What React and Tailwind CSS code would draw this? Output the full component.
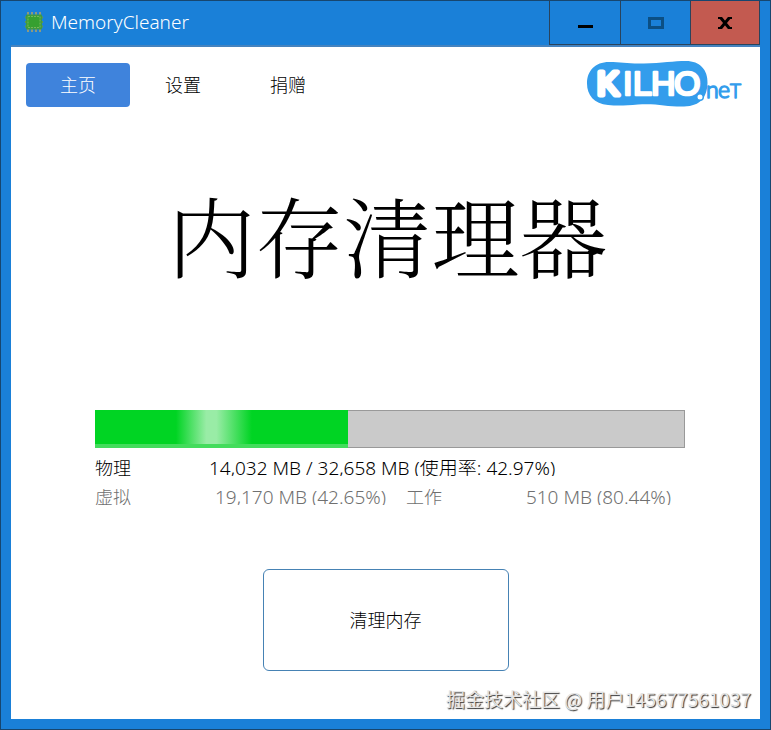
import React, { useState } from "react";

const tabs = [
  { id: "home", label: "主页" },
  { id: "settings", label: "设置" },
  { id: "donate", label: "捐赠" },
];

const memory = {
  physical: { used: "14,032 MB", total: "32,658 MB", percent: 42.97 },
  virtual: { used: "19,170 MB", percent: 42.65 },
  working: { used: "510 MB", percent: 80.44 },
};

const ChipIcon = () => (
  <svg width="18" height="20" viewBox="0 0 18 20" aria-hidden="true">
    <path d="M3 0v20M7 0v20M11 0v20M15 0v20" stroke="#8c9a80" strokeWidth="2" />
    <path d="M0 5.500h18M0 10h18M0 14.500h18" stroke="#5c9a4c" strokeWidth="2" />
    <rect x="1" y="2.500" width="16" height="15" rx="1" fill="#3f9a40" />
    <rect
      x="3"
      y="4.500"
      width="12"
      height="11"
      fill="#36a030"
      stroke="#74b858"
      strokeDasharray="2 1"
    />
  </svg>
);

const Logo = () => (
  <svg width="158" height="48" viewBox="0 0 158 48" role="img" aria-label="KILHO.net">
    <path
      d="M23 2C36 2 42 4 58 3.500C76 3 88 1 100 1C114 1 122 10 121.500 23C121 37 115 46 98 46.500C82 47 70 43 52 44.500C40 45.500 32 46 22 45C8 44 1 35 1 23.500C1 11 9 2 23 2Z"
      fill="#339dec"
    />
    <g strokeLinejoin="round">
      <text
        y="35"
        fontSize="34"
        fill="#fff"
        stroke="#fff"
        strokeWidth="2.5"
        fontFamily="'Liberation Sans Narrow', 'Liberation Sans', sans-serif"
      >
        <tspan x="11" fontSize="33" strokeWidth="5">K</tspan>
        <tspan x="37">I</tspan>
        <tspan x="47">L</tspan>
        <tspan x="65">H</tspan>
        <tspan x="88" fontFamily="'Liberation Sans', sans-serif">O</tspan>
      </text>
      <circle cx="114" cy="37" r="4" fill="#339dec" />
      <circle cx="114" cy="37" r="2.500" fill="#fff" />
      <text
        y="38"
        fontSize="23"
        fill="#339dec"
        stroke="#339dec"
        strokeWidth="1.500"
        fontFamily="Lato, sans-serif"
      >
        <tspan x="120">n</tspan>
        <tspan x="132">e</tspan>
        <tspan x="144" fontSize="19">T</tspan>
      </text>
    </g>
  </svg>
);

const TitleBar = () => (
  <header className="flex h-11 items-stretch">
    <div className="flex flex-1 items-center gap-2 pb-0.5 pl-[14px]">
      <ChipIcon />
      <h1 className="text-[19px] leading-7 text-white">MemoryCleaner</h1>
    </div>
    <div className="flex border-b border-l border-[#29435c]">
      <button
        type="button"
        aria-label="最小化"
        className="flex w-[71px] items-center justify-center border-r border-[#29435c]"
      >
        <svg width="16" height="16" viewBox="0 0 16 16">
          <path d="M1 11.500h15" stroke="#000" strokeWidth="3" />
        </svg>
      </button>
      <button
        type="button"
        aria-label="最大化"
        className="flex w-[70px] items-center justify-center border-r border-[#29435c]"
      >
        <svg width="16" height="12" viewBox="0 0 16 12">
          <rect x="1.500" y="1.500" width="13" height="9" fill="none" stroke="#0b4f84" strokeWidth="3" />
        </svg>
      </button>
      <button
        type="button"
        aria-label="关闭"
        className="flex w-[69px] items-center justify-center border-r border-[#29435c] bg-[#c35a50]"
      >
        <svg width="14" height="12" viewBox="0 0 14 12">
          <path d="M2.500 0.500L11.500 11.500M11.500 0.500L2.500 11.500" stroke="#000" strokeWidth="3" />
          <path d="M0 1h4M10 1h4M0 11h4M10 11h4" stroke="#000" strokeWidth="2" />
        </svg>
      </button>
    </div>
  </header>
);

const App = () => {
  const [activeTab, setActiveTab] = useState("home");
  const { physical, virtual, working } = memory;

  return (
    <div className="relative flex min-h-screen flex-col border border-[#17466f] bg-[#1a80d8] px-[10px] pb-[10px] font-['Noto_Sans','Noto_Sans_CJK_SC',sans-serif] font-light">
      <TitleBar />

      <main className="flex flex-1 flex-col border-t-2 border-[#4583bf] bg-white">
        <div className="flex items-start justify-between pt-[13px] pr-4 pl-[15px]">
          <nav className="flex gap-px pt-[3px]">
            {tabs.map((tab) => (
              <button
                key={tab.id}
                type="button"
                onClick={() => setActiveTab(tab.id)}
                className={`h-11 w-[104px] rounded-sm text-lg ${
                  activeTab === tab.id ? "bg-[#3f83dc] text-white" : "text-black"
                }`}
              >
                {tab.label}
              </button>
            ))}
          </nav>
          <Logo />
        </div>

        <h2 className="mt-[81px] pl-1 text-center font-['Noto_Serif_CJK_SC','Noto_Sans_CJK_SC',serif] text-[88px] leading-[88px] font-light text-black">
          内存清理器
        </h2>

        <section className="mt-[133px] pr-[75px] pl-[84px]">
          <div
            role="progressbar"
            aria-label="物理"
            aria-valuenow={physical.percent}
            className="h-[38px] border border-[#999] bg-[#cacaca]"
          >
            <div
              className="-mt-px -ml-px h-[38px] border-b-4 border-[#43dc5c] bg-[linear-gradient(90deg,#00d423_32%,#99eca6_44%,#99eca6_48%,#00d423_62%)]"
              style={{ width: `${physical.percent}%` }}
            />
          </div>

          <div className="mt-3 flex h-4 items-center overflow-hidden text-[19px] leading-4 text-black">
            <span className="w-[114px] text-lg leading-4">物理</span>
            <span>
              {physical.used} / {physical.total} (使用率: {physical.percent}%)
            </span>
          </div>
          <div className="mt-[13px] flex h-4 items-center overflow-hidden pr-[14px] text-[19px] leading-4 text-[#707070]">
            <span className="w-9 text-lg leading-4">虚拟</span>
            <span className="w-[255px] text-right">
              {virtual.used} ({virtual.percent}%)
            </span>
            <span className="ml-5 text-lg leading-4">工作</span>
            <span className="flex-1 text-right">
              {working.used} ({working.percent}%)
            </span>
          </div>
        </section>

        <button
          type="button"
          className="mx-auto mt-16 mb-12 h-[102px] w-[246px] rounded-md border border-[#4682b4] bg-white text-lg text-black"
        >
          清理内存
        </button>
      </main>

      <p className="absolute right-[19px] bottom-4 font-['Noto_Sans_CJK_SC',sans-serif] text-[19px] leading-7 font-normal text-[#e4e4e4] [text-shadow:1px_1px_1px_#333]">
        掘金技术社区 @ 用户145677561037
      </p>
    </div>
  );
};

export default App;
